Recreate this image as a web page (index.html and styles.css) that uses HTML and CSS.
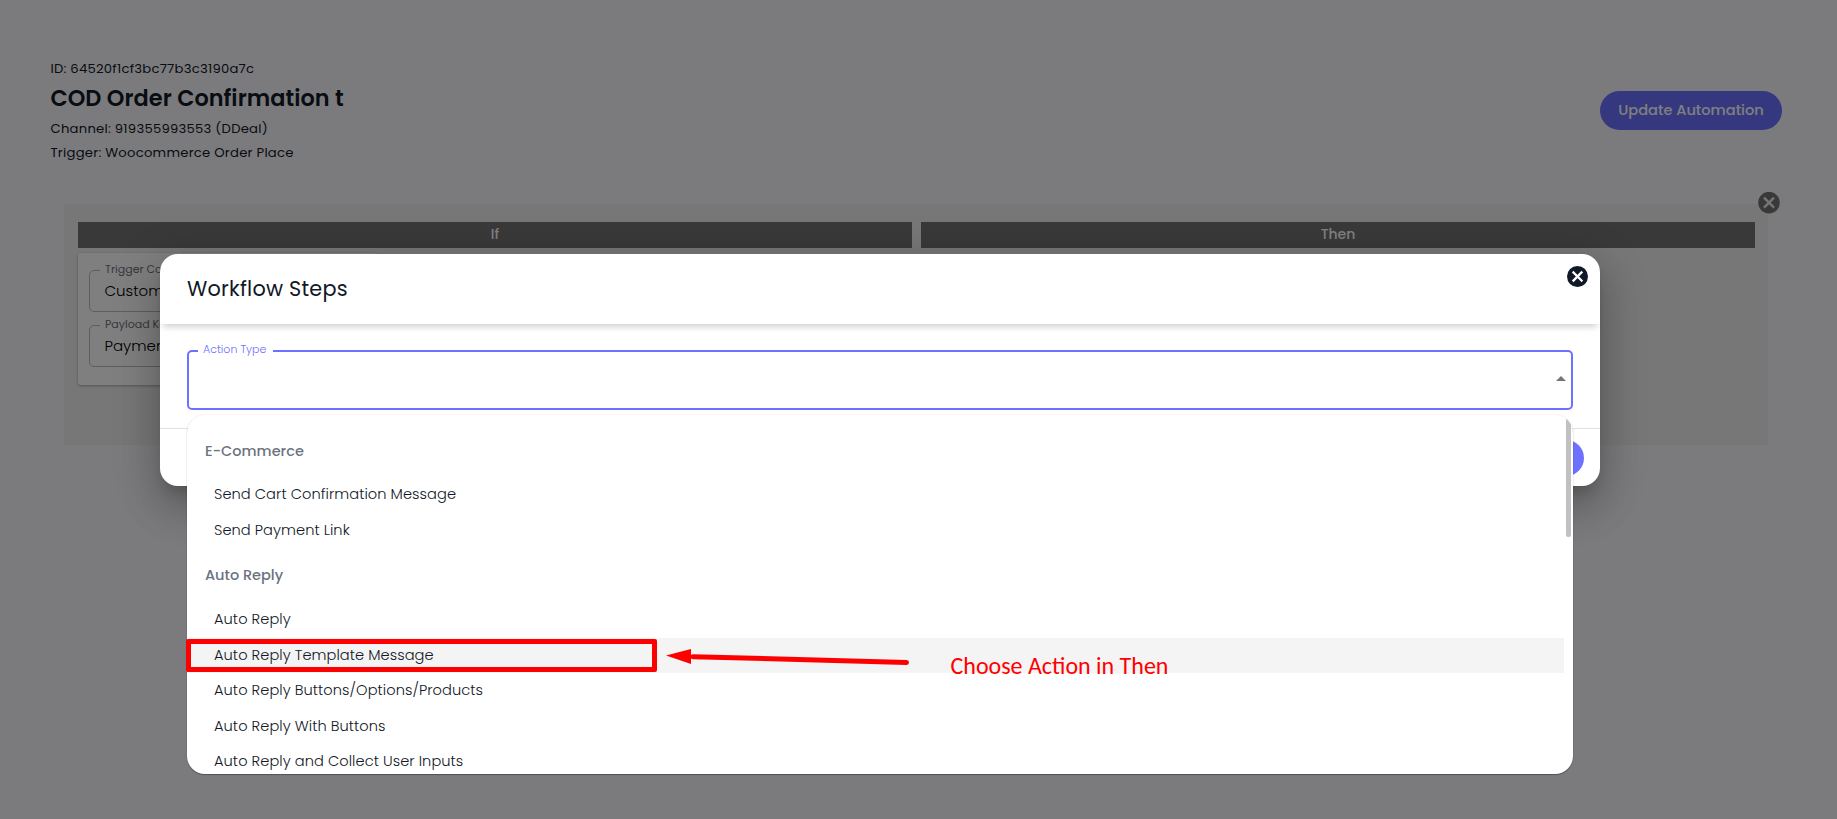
FILE: index.html
```html
<!DOCTYPE html>
<html lang="en">
<head>
<meta charset="utf-8">
<title>Workflow Steps</title>
<link rel="stylesheet" href="styles.css">
</head>
<body>
<main class="page">
  <header class="head">
    <div class="info">
      <p class="meta id">ID: 64520f1cf3bc77b3c3190a7c</p>
      <h1>COD Order Confirmation t</h1>
      <p class="meta">Channel: 919355993553 (DDeal)</p>
      <p class="meta">Trigger: Woocommerce Order Place</p>
    </div>
    <button class="update">Update Automation</button>
  </header>
  <section class="panel">
    <div class="column">
      <div class="bar">If</div>
      <div class="card">
        <fieldset class="field"><legend>Trigger Condition</legend>Custom</fieldset>
        <fieldset class="field second"><legend>Payload Key</legend>Payment</fieldset>
      </div>
    </div>
    <div class="column"><div class="bar">Then</div></div>
    <svg class="remove" viewBox="0 0 22 22"><circle cx="11" cy="10.6" r="10.8" fill="#737373"/><path d="M6.8 6.4l8.4 8.4M15.2 6.4l-8.4 8.4" stroke="#efefef" stroke-width="2.3" stroke-linecap="square"/></svg>
  </section>
</main>

<div class="backdrop"></div>

<div class="dialog">
  <div class="dialog-head">
    <h2>Workflow Steps</h2>
    <svg class="close" viewBox="0 0 22 22"><circle cx="11.5" cy="11.5" r="10.5" fill="#111827"/><path d="M7.5 7.5l8 8M15.5 7.5l-8 8" stroke="#fff" stroke-width="2.3" stroke-linecap="square"/></svg>
  </div>
  <div class="dialog-body">
    <fieldset class="select">
      <legend>Action Type</legend>
      <svg class="caret" viewBox="0 0 10 5"><path d="M0 5L5 0l5 5z" fill="#757575"/></svg>
    </fieldset>
  </div>
  <div class="dialog-foot"><button class="save"></button></div>
</div>

<div class="menu">
  <div class="group">E-Commerce</div>
  <div class="item">Send Cart Confirmation Message</div>
  <div class="item">Send Payment Link</div>
  <div class="group later">Auto Reply</div>
  <div class="item reply">Auto Reply</div>
  <div class="item reply hover">Auto Reply Template Message</div>
  <div class="item reply">Auto Reply Buttons/Options/Products</div>
  <div class="item reply">Auto Reply With Buttons</div>
  <div class="item reply">Auto Reply and Collect User Inputs</div>
  <div class="thumb"></div>
</div>

<div class="mark"></div>
<svg class="arrow" viewBox="0 0 250 20"><path d="M28 8.7L241.5 14.4" stroke="#f00" stroke-width="5" stroke-linecap="round"/><path d="M1 7.5L26 1v15z" fill="#f00"/></svg>
<div class="note">Choose Action in Then</div>
</body>
</html>
```
FILE: styles.css
```css
* { box-sizing: border-box; }
body {
  margin: 0;
  height: 819px;
  overflow: hidden;
  position: relative;
  background: #f7f7fb;
  color: #111827;
  font-family: Poppins, Inter, sans-serif;
}
h1, h2, p { margin: 0; }
button { border: 0; font-family: inherit; }
fieldset { min-width: 0; margin: 0; }

.page { padding: 57px 55px 0 50px; }
.head { display: flex; justify-content: space-between; height: 147px; }
.info { padding-left: .5px; }
.meta { font-size: 13.2px; line-height: 24px; letter-spacing: .24px; }
h1 { height: 36px; font-size: 22.4px; font-weight: 600; line-height: 34px; letter-spacing: .05px; }
.update {
  width: 182px;
  height: 39px;
  margin-top: 34px;
  padding: 0;
  border-radius: 20px;
  background: #6c71ff;
  color: #fff;
  font-size: 14.6px;
  font-weight: 500;
}

.panel {
  position: relative;
  display: flex;
  gap: 9px;
  width: 1704px;
  height: 241px;
  margin-left: 14px;
  padding: 18px 13px 0 14px;
  background: #efefef;
}
.column { flex: 1; }
.bar {
  height: 26px;
  background: #737373;
  color: #fff;
  font-size: 14px;
  font-weight: 500;
  line-height: 25px;
  text-align: center;
}
.card {
  width: 300px;
  height: 132px;
  margin-top: 5px;
  padding: 10px 11px;
  border-radius: 3px;
  background: #fff;
  box-shadow: 0 1px 3px rgba(0, 0, 0, .3);
}
.field {
  height: 49px;
  padding: 0 5px;
  border: 1px solid #bcbcbc;
  border-radius: 5px;
  color: #000;
  font-size: 15px;
  font-weight: 300;
  line-height: 25px;
  text-indent: 9.5px;
}
.second { margin-top: 6px; }
.field legend {
  margin-left: 5px;
  padding: 0 6px 2px 5px;
  color: #6b7280;
  font-size: 11px;
  font-weight: 400;
  line-height: 13px;
  text-indent: 0;
}
.remove { position: absolute; top: -12px; right: -12px; width: 22px; height: 22px; }

.backdrop { position: absolute; inset: 0; background: rgba(0, 0, 0, .5); }

.dialog {
  position: absolute;
  left: 160px;
  top: 254px;
  width: 1440px;
  height: 232px;
  border-radius: 18px;
  background: #fff;
  box-shadow: 0 11px 15px -7px rgba(0, 0, 0, .2), 0 24px 38px 3px rgba(0, 0, 0, .14), 0 9px 46px 8px rgba(0, 0, 0, .12);
}
.dialog-head {
  display: flex;
  justify-content: space-between;
  height: 70px;
  padding: 11px 12px 0 27px;
  border-radius: 18px 18px 0 0;
  box-shadow: 0 6px 6px -3px rgba(0, 0, 0, .18);
}
h2 { font-size: 20.8px; font-weight: 400; line-height: 47px; letter-spacing: .23px; }
.close { width: 22px; height: 22px; }
.dialog-body { height: 104px; padding: 19px 27px 0; }
.select {
  display: flex;
  justify-content: flex-end;
  width: 1386px;
  height: 67px;
  padding: 18px 5px 0 9px;
  border: 2px solid #6c71ff;
  border-radius: 5px;
}
.select legend {
  padding: 0 7px 2px 5px;
  color: #6c71ff;
  font-size: 11px;
  font-weight: 300;
  line-height: 13px;
}
.caret { width: 10px; height: 5px; }
.dialog-foot {
  display: flex;
  justify-content: flex-end;
  height: 58px;
  padding: 11px 16px;
  border-top: 1px solid #e0e0e0;
}
.save { width: 90px; height: 36px; border-radius: 18px; background: #6c71ff; }

.menu {
  position: absolute;
  left: 187px;
  top: 415px;
  width: 1385.5px;
  height: 359px;
  padding: 6px 8.5px 0 0;
  overflow: hidden;
  border-radius: 18px;
  background: #fff;
  box-shadow: 0 0 2px rgba(0, 0, 0, .12), 0 1px 1px rgba(0, 0, 0, .3);
}
.group {
  height: 55px;
  padding: 4px 0 0 18px;
  color: #6b7280;
  font-size: 14.5px;
  font-weight: 500;
  line-height: 52px;
}
.later { padding-top: 2px; }
.item {
  height: 35.5px;
  padding-left: 27px;
  font-size: 14.6px;
  font-weight: 300;
  line-height: 36px;
  letter-spacing: .06px;
}
.reply { line-height: 34px; }
.hover { background: #f4f4f4; }
.thumb { position: absolute; right: 2px; top: 0; width: 5px; height: 122px; border-radius: 0 0 2px 2px; background: #c1c1c1; }

.mark { position: absolute; left: 186px; top: 639px; width: 471px; height: 33px; border: 5px solid #f00; border-radius: 2px; }
.arrow { position: absolute; left: 665px; top: 648px; width: 250px; height: 20px; }
.note {
  position: absolute;
  left: 950.5px;
  top: 651px;
  color: #f00;
  font: 400 24px/30px Carlito, Calibri, Lato, sans-serif;
  white-space: nowrap;
}
```
